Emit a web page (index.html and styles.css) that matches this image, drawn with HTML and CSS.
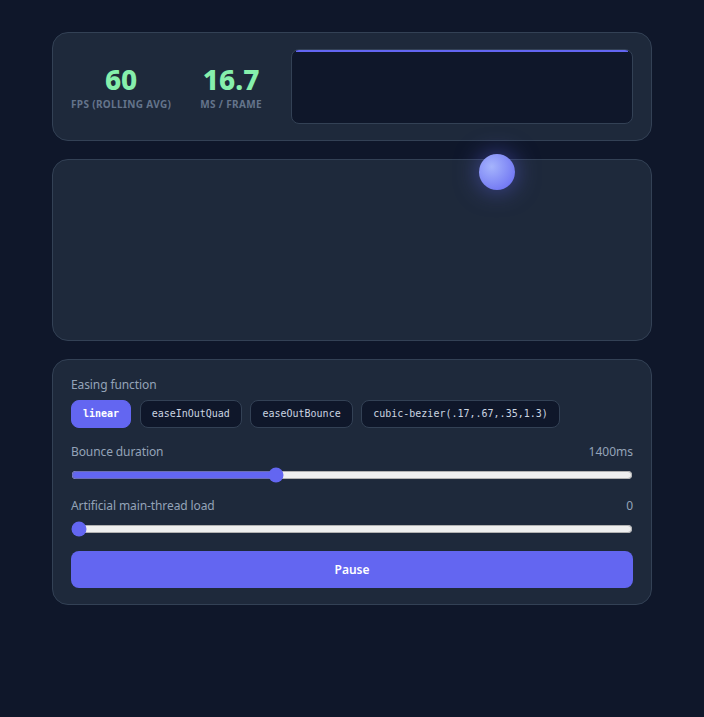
FILE: index.html
```html
<!DOCTYPE html>
<html>
<head>
<meta charset="utf-8">
<link rel="stylesheet" href="styles.css">
</head>
<body>
<main class="wrap">
  <section class="card stats-card">
    <div class="stat">
      <div class="stat-value">60</div>
      <div class="stat-label">FPS (rolling avg)</div>
    </div>
    <div class="stat">
      <div class="stat-value">16.7</div>
      <div class="stat-label">ms / frame</div>
    </div>
    <div class="graph"><div class="graph-line"></div></div>
  </section>

  <section class="card stage">
    <div class="ball"></div>
  </section>

  <section class="card controls">
    <div class="label">Easing function</div>
    <div class="easings">
      <button class="chip active">linear</button>
      <button class="chip">easeInOutQuad</button>
      <button class="chip">easeOutBounce</button>
      <button class="chip">cubic-bezier(.17,.67,.35,1.3)</button>
    </div>
    <div class="row first">
      <span class="label">Bounce duration</span>
      <span class="value">1400ms</span>
    </div>
    <input class="slider" type="range" min="100" max="3700" value="1400">
    <div class="row">
      <span class="label">Artificial main-thread load</span>
      <span class="value">0</span>
    </div>
    <input class="slider" type="range" min="0" max="100" value="0">
    <button class="pause">Pause</button>
  </section>
</main>
</body>
</html>
```

FILE: styles.css
```css
* { box-sizing: border-box; }
html, body {
  margin: 0;
  background: #0f172a;
  font-family: "Noto Sans", "Open Sans", sans-serif;
  color: #cbd5e1;
}
.wrap {
  width: 600px;
  margin: 32px auto 0;
  display: flex;
  flex-direction: column;
  gap: 18px;
}
.card {
  background: #1e293b;
  border: 1px solid #334155;
  border-radius: 16px;
}
.stats-card {
  display: flex;
  align-items: center;
  gap: 29px;
  padding: 16px 18px;
}
.stat {
  display: flex;
  flex-direction: column;
  align-items: center;
}
.stat-value {
  font-size: 28px;
  font-weight: 800;
  color: #86efac;
  line-height: 32px;
}
.stat-label {
  font-size: 10px;
  font-weight: 700;
  color: #64748b;
  text-transform: uppercase;
  letter-spacing: 0.35px;
  margin-top: 2px;
}
.graph {
  flex: 1;
  height: 75px;
  background: #0f172a;
  border: 1px solid #334155;
  border-radius: 8px;
  position: relative;
  overflow: hidden;
}
.graph-line {
  height: 2px;
  margin: 0 4px;
  background: #6366f1;
}
.stage {
  height: 182px;
  position: relative;
}
.ball {
  position: absolute;
  left: 426px;
  top: -6px;
  width: 36px;
  height: 36px;
  border-radius: 50%;
  background: radial-gradient(circle at 35% 35%, #a5b4fc, #6366f1);
  box-shadow: 0 0 24px rgba(99, 102, 241, 0.55);
}
.controls {
  padding: 17px 18px 16px;
  display: flex;
  flex-direction: column;
}
.label {
  font-size: 12px;
  color: #94a3b8;
  line-height: 16px;
  letter-spacing: -0.1px;
}
.value {
  font-size: 12px;
  color: #94a3b8;
}
.easings {
  display: flex;
  gap: 8.5px;
  margin-top: 7px;
}
.chip {
  font-family: "DejaVu Sans Mono", monospace;
  font-size: 10px;
  line-height: 12px;
  padding: 7px 11px;
  border: 1px solid #334155;
  border-radius: 8px;
  background: #0f172a;
  color: #cbd5e1;
}
.chip.active {
  background: #6366f1;
  border-color: #6366f1;
  color: #fff;
  font-weight: 700;
}
.row {
  display: flex;
  justify-content: space-between;
  margin-top: 15px;
  line-height: 16px;
}
.row.first {
  margin-top: 16px;
}
.slider {
  width: 100%;
  margin: 7px 0 0;
  accent-color: #6366f1;
}
.pause {
  margin-top: 14px;
  height: 37px;
  border: none;
  border-radius: 8px;
  background: #6366f1;
  color: #fff;
  font-family: inherit;
  font-size: 12px;
  font-weight: 600;
}
```
